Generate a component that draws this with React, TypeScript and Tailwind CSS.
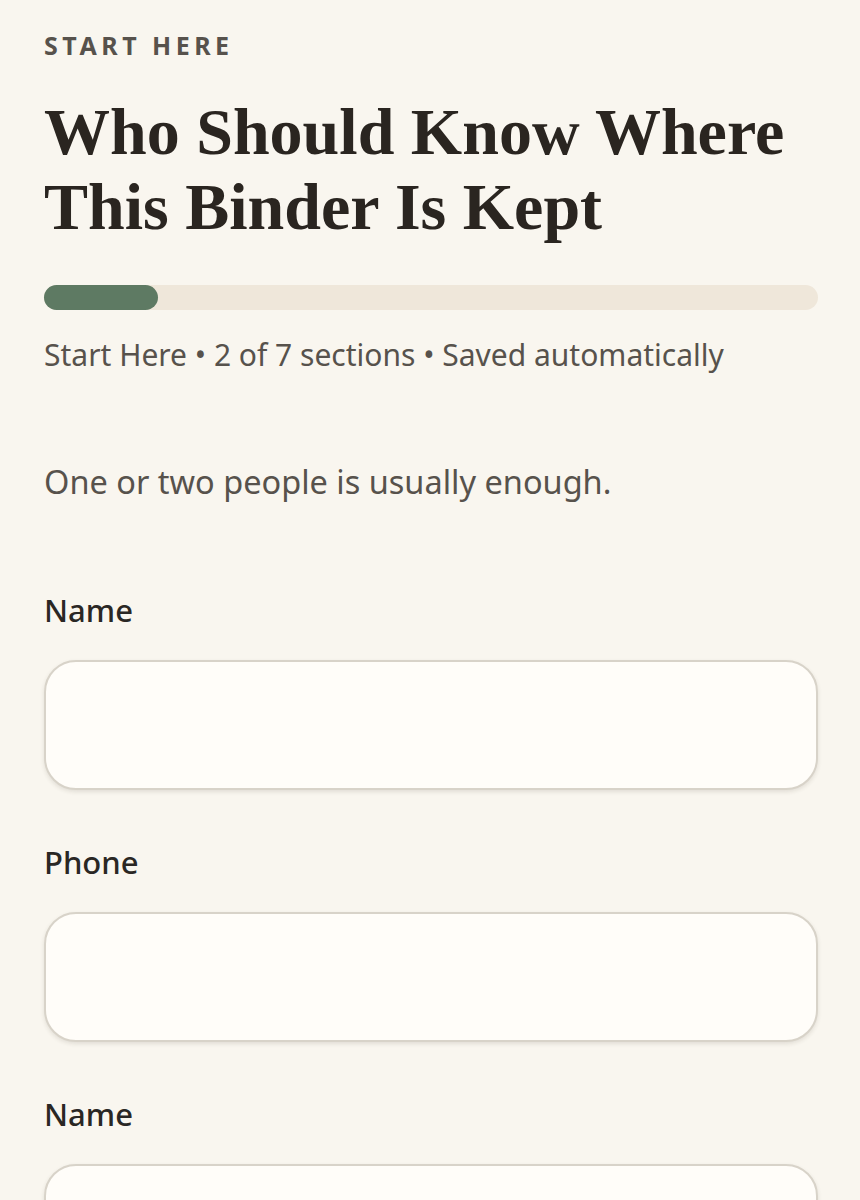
import React from "react";

const fields = ["Name", "Phone", "Name", "Phone"];

export default function App() {
  return (
    <div className="min-h-screen bg-[#f9f6ef] pl-[44px] pr-[42px] pt-[29px] pb-20 font-['Noto_Sans',sans-serif] text-[#2a2724]">
      <div className="text-[25px] font-bold tracking-[0.18em] text-[#57524c] leading-[32px]">
        START HERE
      </div>
      <h1 className="mt-[33px] font-['Liberation_Serif',serif] text-[66px] font-bold leading-[75px] text-[#2a2520]">
        Who Should Know Where This Binder Is Kept
      </h1>
      <div className="mt-[41px] h-[25px] w-full rounded-full bg-[#efe7da]">
        <div className="h-full w-[114px] rounded-full bg-[#5e7a63]" />
      </div>
      <p className="mt-[25px] text-[30px] leading-[40px] text-[#57524c]">
        Start Here • 2 of 7 sections • Saved automatically
      </p>
      <p className="mt-[85px] text-[32.5px] leading-[44px] text-[#57524c]">
        One or two people is usually enough.
      </p>
      <div className="mt-[86px] flex flex-col gap-[52px]">
        {fields.map((label, i) => (
          <label key={i} className="flex flex-col">
            <span className="text-[31px] font-medium leading-[40px] text-[#2a2724]">{label}</span>
            <input
              type="text"
              className="mt-[30px] h-[130px] w-full rounded-[32px] border-2 border-[#d8d3c9] bg-[#fffdf9] px-6 text-[30px] shadow-[0_2px_4px_rgba(60,50,30,0.12)] outline-none"
            />
          </label>
        ))}
      </div>
    </div>
  );
}
